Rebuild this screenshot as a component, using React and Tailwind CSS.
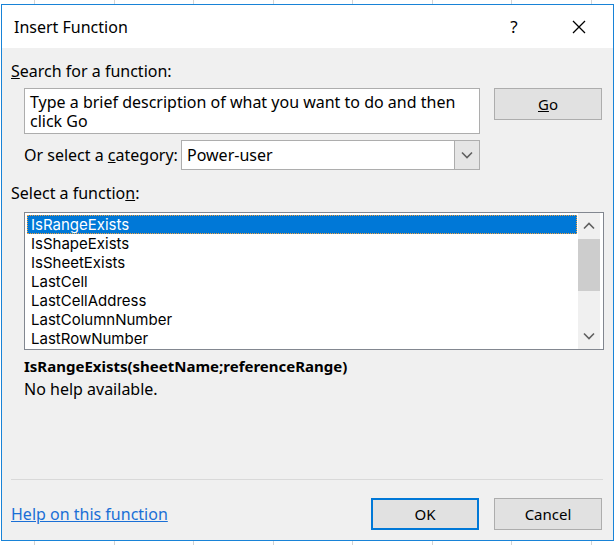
import React from "react";

const font = { fontFamily: '"Noto Sans", "Open Sans", sans-serif' };

function Chevron({ dir = "down", className = "" }) {
  return (
    <svg width="12" height="8" viewBox="0 0 12 8" className={className}>
      {dir === "down" ? (
        <path d="M1 1.5 L6 6.5 L11 1.5" fill="none" stroke="currentColor" strokeWidth="1.6" />
      ) : (
        <path d="M1 6.5 L6 1.5 L11 6.5" fill="none" stroke="currentColor" strokeWidth="1.6" />
      )}
    </svg>
  );
}

const items = [
  "IsRangeExists",
  "IsShapeExists",
  "IsSheetExists",
  "LastCell",
  "LastCellAddress",
  "LastColumnNumber",
  "LastRowNumber",
];

export default function App() {
  return (
    <div
      className="w-[616px] h-[545px] overflow-hidden pt-[4px] pl-[1px] bg-[repeating-linear-gradient(90deg,#ffffff_0px,#ffffff_34px,#d4d4d4_34px,#d4d4d4_35px,#ffffff_35px,#ffffff_79.5px)]"
      style={font}
    >
      <div className="w-[613px] h-[537px] border border-[#1883d7] bg-[#f0f0f0] flex flex-col text-[16px] text-[#000]">
        {/* Title bar */}
        <div className="h-[43px] bg-white flex items-center shrink-0">
          <div className="pl-[12px] text-[16px] text-[#000] flex-1">Insert Function</div>
          <div className="w-[20px] text-center text-[17px] mr-[48px]">?</div>
          <svg width="14" height="14" viewBox="0 0 14 14" className="mr-[27px]">
            <path d="M1 1 L13 13 M13 1 L1 13" stroke="#000" strokeWidth="1.3" />
          </svg>
        </div>

        {/* Body */}
        <div className="flex flex-col flex-1 px-[9px]">
          <div className="mt-[13px] leading-[20px]">
            <span className="underline">S</span>earch for a function:
          </div>

          <div className="flex mt-[7px] ml-[13px]">
            <div className="w-[456px] h-[46px] bg-white border border-[#adadad] px-[5px] pt-[4px] leading-[19px]">
              Type a brief description of what you want to do and then click Go
            </div>
            <button className="ml-[14px] w-[108px] h-[32px] bg-[#e1e1e1] border border-[#adadad] text-[15px]">
              <span className="underline">G</span>o
            </button>
          </div>

          <div className="flex items-center mt-[6px] ml-[13px] h-[30px]">
            <div className="w-[157px] leading-[20px] whitespace-nowrap">
              Or select a <span className="underline">c</span>ategory:
            </div>
            <div className="w-[299px] h-[30px] bg-white border border-[#adadad] flex">
              <div className="flex-1 pl-[5px] leading-[28px]">Power-user</div>
              <div className="w-[25px] h-full bg-[#e5e5e5] border-l border-[#adadad] flex items-center justify-center text-[#606060]">
                <Chevron />
              </div>
            </div>
          </div>

          <div className="mt-[13px] leading-[20px]">
            Select a functio<span className="underline">n</span>:
          </div>

          <div
            className="mt-[9px] ml-[13px] w-[580px] h-[138px] bg-white border border-[#828790] flex text-[15px] font-['Inter',_'Noto_Sans',_sans-serif]"
          >
            <div className="flex-1 pt-[2px] pl-[2px] pr-[1px]">
              {items.map((it, i) =>
                i === 0 ? (
                  <div
                    key={it}
                    className="h-[19px] leading-[17px] bg-[#0078d7] text-white pl-[3px] border border-dotted border-[#f0a040]"
                  >
                    {it}
                  </div>
                ) : (
                  <div key={it} className="h-[19px] leading-[19px] pl-[4px]">
                    {it}
                  </div>
                )
              )}
            </div>
            <div className="w-[22px] mr-[3px] bg-[#f0f0f0] flex flex-col items-center">
              <div className="h-[26px] flex items-center justify-center text-[#606060]">
                <Chevron dir="up" />
              </div>
              <div className="w-full h-[52px] bg-[#cdcdcd]" />
              <div className="flex-1" />
              <div className="h-[26px] flex items-center justify-center text-[#606060]">
                <Chevron />
              </div>
            </div>
          </div>

          <div className="mt-[6px] ml-[13px] leading-[20px] font-bold text-[15px]">
            IsRangeExists(sheetName;referenceRange)
          </div>
          <div className="mt-[3px] ml-[13px] leading-[20px]">No help available.</div>

          <div className="flex-1" />
          <div className="h-px bg-[#d9d9d9] w-[592px]" />
          <div className="flex items-center mt-[18px] mb-[10px] h-[32px]">
            <a className="flex-1 text-[#1a6fd6] underline leading-[20px] cursor-pointer">
              Help on this function
            </a>
            <button className="w-[108px] h-[32px] bg-[#e1e1e1] border-2 border-[#0078d7] text-[15px]">
              OK
            </button>
            <button className="ml-[15px] mr-[2px] w-[108px] h-[32px] bg-[#e1e1e1] border border-[#adadad] text-[15px]">
              Cancel
            </button>
          </div>
        </div>
      </div>
    </div>
  );
}
